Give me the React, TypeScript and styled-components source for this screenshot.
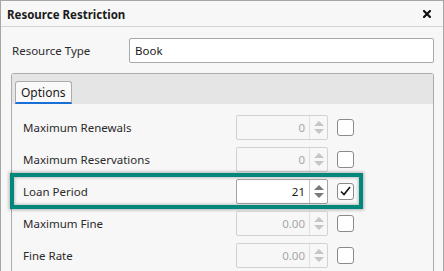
import React from "react";
import styled, { createGlobalStyle, css } from "styled-components";

const Global = createGlobalStyle`
  html, body { margin: 0; padding: 0; background: #f7f7f7; }
  body { font-family: "Noto Sans", "Open Sans", sans-serif; font-size: 11.5px; color: #1e1e1e; }
`;

const Window = styled.div`
  width: 444px;
  height: 271px;
  box-sizing: border-box;
  border: 1px solid #a6a6a6;
  border-bottom: none;
  background: #f7f7f7;
  overflow: hidden;
  display: flex;
  flex-direction: column;
`;

const TitleBar = styled.div`
  flex: none;
  display: flex;
  align-items: center;
  justify-content: space-between;
  padding: 1px 12px 0 6px;
  box-sizing: border-box;
  height: 26px;
  border-bottom: 1px solid #d4d4d4;
  background: #f7f7f7;
`;

const Title = styled.span`
  font-weight: 700;
  font-size: 11.5px;
  color: #1a1a1a;
`;

const CloseIcon = styled.svg`
  width: 8px;
  height: 8px;
  display: block;
`;

const Body = styled.div`
  padding: 11px 9px 0 10px;
  display: flex;
  flex-direction: column;
  gap: 10px;
`;

const FieldRow = styled.div`
  display: flex;
  align-items: center;
  height: 25px;
`;

const FieldLabel = styled.span`
  width: 117px;
  flex: none;
  padding-left: 1px;
  color: #2a2a2a;
`;

const TextBox = styled.div`
  flex: 1;
  height: 25px;
  box-sizing: border-box;
  border: 1px solid #a9a9a9;
  border-radius: 2px;
  background: #ffffff;
  display: flex;
  align-items: center;
  padding-left: 5px;
  color: #1a1a1a;
`;

const TabControl = styled.div`
  border: 1px solid #acacac;
  border-bottom: none;
  border-radius: 3px 3px 0 0;
  height: 220px;
  background: #f7f7f7;
`;

const TabStrip = styled.div`
  height: 30px;
  box-sizing: border-box;
  background: #e5e5e5;
  padding: 7px 3px 0 3px;
  display: flex;
  align-items: flex-end;
`;

const Tab = styled.div`
  height: 23px;
  box-sizing: border-box;
  padding: 0 5px;
  background: #f9f9f9;
  border: 1px solid #acacac;
  border-bottom: 2px solid #1a6fd6;
  border-radius: 3px 3px 0 0;
  display: flex;
  align-items: center;
  font-size: 12px;
  color: #1a1a1a;
`;

const Panel = styled.div`
  padding: 7px 0 0 0;
  display: flex;
  flex-direction: column;
`;

const Row = styled.div<{ $highlight?: boolean }>`
  position: relative;
  height: 32px;
  display: flex;
  align-items: center;
  padding-left: 11px;
  ${(p) =>
    p.$highlight &&
    css`
      &::after {
        content: "";
        position: absolute;
        left: -2px;
        top: -2px;
        width: 353px;
        height: 36px;
        box-sizing: border-box;
        border: 4px solid #00887c;
        box-shadow: 0 0 3px 1px rgba(0, 0, 0, 0.28), inset 0 0 3px 1px rgba(0, 0, 0, 0.22);
        pointer-events: none;
      }
    `}
`;

const RowLabel = styled.span`
  width: 213px;
  flex: none;
  color: #2a2a2a;
`;

const Spin = styled.div<{ $enabled?: boolean }>`
  width: 92px;
  height: 25px;
  box-sizing: border-box;
  border: 1px solid ${(p) => (p.$enabled ? "#a4a4a4" : "#d2d2d2")};
  border-radius: 2px;
  background: ${(p) => (p.$enabled ? "#ffffff" : "#f7f7f7")};
  display: flex;
  flex: none;
`;

const SpinValue = styled.div<{ $enabled?: boolean }>`
  flex: 1;
  display: flex;
  align-items: center;
  justify-content: flex-end;
  padding-right: 4px;
  color: ${(p) => (p.$enabled ? "#1a1a1a" : "#a8a8a8")};
`;

const SpinButtons = styled.div<{ $enabled?: boolean }>`
  width: 18px;
  flex: none;
  border-left: 1px solid ${(p) => (p.$enabled ? "#c4c4c4" : "#e0e0e0")};
  display: flex;
  flex-direction: column;
  align-items: center;
  justify-content: space-between;
  padding: 5px 0;
  box-sizing: border-box;
`;

const Arrow = styled.svg`
  width: 10px;
  height: 5px;
  display: block;
`;

const CheckBox = styled.div`
  width: 17px;
  height: 17px;
  box-sizing: border-box;
  margin-left: 9px;
  border: 1px solid #8a8a8a;
  border-radius: 3px;
  background: #ffffff;
  display: flex;
  align-items: center;
  justify-content: center;
  flex: none;
`;

const CheckMark = styled.svg`
  width: 11px;
  height: 10px;
  display: block;
`;

type RowData = { label: string; value: string; enabled?: boolean };

const rows: RowData[] = [
  { label: "Maximum Renewals", value: "0" },
  { label: "Maximum Reservations", value: "0" },
  { label: "Loan Period", value: "21", enabled: true },
  { label: "Maximum Fine", value: "0.00" },
  { label: "Fine Rate", value: "0.00" },
];

function SpinBox({ value, enabled }: { value: string; enabled?: boolean }) {
  const c = enabled ? "#7a7a7a" : "#c6c6c6";
  return (
    <Spin $enabled={enabled}>
      <SpinValue $enabled={enabled}>{value}</SpinValue>
      <SpinButtons $enabled={enabled}>
        <Arrow viewBox="0 0 10 5">
          <polygon points="0,5 5,0 10,5" fill={c} />
        </Arrow>
        <Arrow viewBox="0 0 10 5">
          <polygon points="0,0 10,0 5,5" fill={c} />
        </Arrow>
      </SpinButtons>
    </Spin>
  );
}

export default function App() {
  return (
    <>
      <Global />
      <Window>
        <TitleBar>
          <Title>Resource Restriction</Title>
          <CloseIcon viewBox="0 0 8 8">
            <path d="M1 1 L7 7 M7 1 L1 7" stroke="#111" strokeWidth="2.2" strokeLinecap="square" />
          </CloseIcon>
        </TitleBar>
        <Body>
          <FieldRow>
            <FieldLabel>Resource Type</FieldLabel>
            <TextBox>Book</TextBox>
          </FieldRow>
          <TabControl>
            <TabStrip>
              <Tab>Options</Tab>
            </TabStrip>
            <Panel>
              {rows.map((r) => (
                <Row key={r.label} $highlight={r.enabled}>
                  <RowLabel>{r.label}</RowLabel>
                  <SpinBox value={r.value} enabled={r.enabled} />
                  <CheckBox>
                    {r.enabled && (
                      <CheckMark viewBox="0 0 11 10">
                        <path d="M1 5.5 L4 8.5 L10 1" fill="none" stroke="#111" strokeWidth="1.6" />
                      </CheckMark>
                    )}
                  </CheckBox>
                </Row>
              ))}
            </Panel>
          </TabControl>
        </Body>
      </Window>
    </>
  );
}
